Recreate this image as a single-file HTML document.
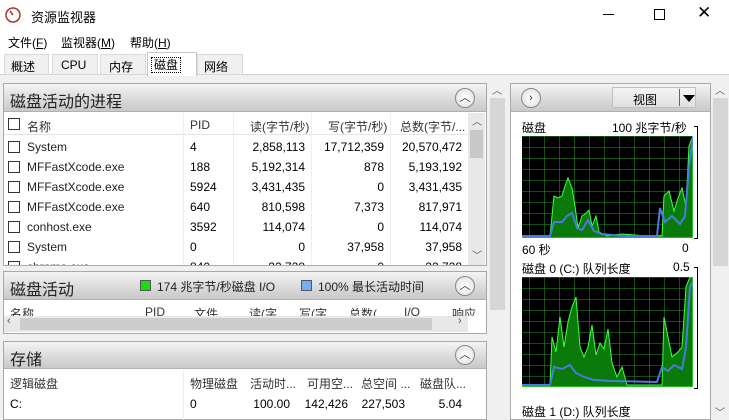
<!DOCTYPE html><html><head><meta charset="utf-8"><style>
*{margin:0;padding:0;box-sizing:border-box}
body{width:729px;height:420px;overflow:hidden;background:#f0f0f0;font-family:"Liberation Sans","Noto Sans CJK SC",sans-serif;font-size:12px;color:#000;position:relative}
.a{position:absolute;white-space:nowrap}
.hdr{position:absolute;background:linear-gradient(#f4f4f4,#d9d9d9 60%,#c9c9c9);border-bottom:1px solid #b0b0b0}
.hdr .t{position:absolute;left:6px;font-size:16px;color:#222}
.circ{position:absolute;width:20px;height:20px;border-radius:50%;border:1px solid #888;background:radial-gradient(#fff,#ddd);font-size:11px;text-align:center;line-height:18px;color:#333}
.cb{position:absolute;width:12px;height:12px;border:1px solid #333;background:#fff}
.r{text-align:right}
.sb{position:absolute;background:#e8e8e8}
.tab{position:absolute;top:54px;height:21px;background:#f0f0f0;border:1px solid #d9d9d9;padding:3px 6px 0}
</style></head><body>
<div class="a" style="left:0;top:0;width:729px;height:31px;background:#fff"></div>
<svg class="a" style="left:5px;top:7px" width="16" height="16"><circle cx="8" cy="8" r="7" fill="#fff" stroke="#b03030" stroke-width="1.5"/><line x1="8" y1="8" x2="5" y2="4" stroke="#b03030" stroke-width="1.5"/></svg>
<div class="a" style="left:31px;top:7px;font-size:13px">资源监视器</div>
<div class="a" style="left:603px;top:14px;width:11px;height:1px;background:#000"></div>
<div class="a" style="left:654px;top:9px;width:11px;height:11px;border:1px solid #000"></div>
<div class="a" style="left:697px;top:3px;font-size:17px">✕</div>
<div class="a" style="left:0;top:31px;width:729px;height:20px;background:#fff"></div>
<div class="a" style="left:8px;top:34px;font-size:12px">文件(<u>F</u>)</div>
<div class="a" style="left:61px;top:34px;font-size:12px">监视器(<u>M</u>)</div>
<div class="a" style="left:130px;top:34px;font-size:12px">帮助(<u>H</u>)</div>
<div class="a" style="left:0;top:51px;width:729px;height:24px;background:#fff;border-bottom:1px solid #d0d0d0"></div>
<div class="tab" style="left:4px;width:45px">概述</div>
<div class="tab" style="left:52px;width:46px;padding-left:8px">CPU</div>
<div class="tab" style="left:100px;width:46px;padding-left:8px">内存</div>
<div class="a" style="left:147px;top:52px;width:50px;height:24px;background:#fff;border:1px solid #c8c8c8;border-bottom:none;padding:3px 4px"><span style="outline:1px dotted #000;padding:0 2px">磁盘</span></div>
<div class="tab" style="left:197px;width:46px">网络</div>

<div class="a" style="left:3px;top:83px;width:484px;height:183px;background:#fff;border:1px solid #a9a9a9"></div>
<div class="hdr" style="left:4px;top:84px;width:482px;height:28px"><div class="t" style="top:4px">磁盘活动的进程</div><div class="circ" style="left:451px;top:4px">︿</div></div>
<div class="a" style="left:4px;top:113px;width:464px;height:22px;background:#fff;border-bottom:1px solid #e5e5e5"></div>
<div class="cb" style="left:8px;top:118px"></div>
<div class="a" style="left:27px;top:118px;color:#333">名称</div>
<div class="a" style="left:190px;top:118px;color:#333">PID</div>
<div class="a" style="left:250px;top:118px;color:#333">读(字节/秒)</div>
<div class="a" style="left:328px;top:118px;color:#333">写(字节/秒)</div>
<div class="a" style="left:400px;top:118px;color:#333">总数(字节/...</div>
<div class="a" style="left:183px;top:113px;width:1px;height:152px;background:#eee"></div>
<div class="a" style="left:233px;top:113px;width:1px;height:152px;background:#eee"></div>
<div class="a" style="left:311px;top:113px;width:1px;height:152px;background:#eee"></div>
<div class="a" style="left:390px;top:113px;width:1px;height:152px;background:#eee"></div>
<div class="a" style="left:4px;top:136px;width:464px;height:129px;overflow:hidden" id="rows"></div>
<div class="sb" style="left:468px;top:113px;width:17px;height:152px"></div>
<div class="a" style="left:470px;top:130px;width:13px;height:28px;background:#c8c8c8"></div>
<div class="a" style="left:472px;top:113px;font-size:10px;color:#555">︿</div>
<div class="a" style="left:472px;top:247px;font-size:10px;color:#555">﹀</div>
<script>
var d=[["System","4","2,858,113","17,712,359","20,570,472"],["MFFastXcode.exe","188","5,192,314","878","5,193,192"],["MFFastXcode.exe","5924","3,431,435","0","3,431,435"],["MFFastXcode.exe","640","810,598","7,373","817,971"],["conhost.exe","3592","114,074","0","114,074"],["System","0","0","37,958","37,958"],["chrome.exe","840","22,728","0","22,728"]];
var h="";d.forEach(function(r,i){var y=1+i*20;h+='<div class="cb" style="left:4px;top:'+(y+4)+'px"></div><div class="a" style="left:23px;top:'+(y+3)+'px;color:#222">'+r[0]+'</div><div class="a" style="left:186px;top:'+(y+3)+'px">'+r[1]+'</div><div class="a r" style="left:229px;width:72px;top:'+(y+3)+'px">'+r[2]+'</div><div class="a r" style="left:307px;width:73px;top:'+(y+3)+'px">'+r[3]+'</div><div class="a r" style="left:386px;width:72px;top:'+(y+3)+'px">'+r[4]+'</div>';});
document.getElementById("rows").innerHTML=h;
</script>
<div class="a" style="left:3px;top:271px;width:484px;height:63px;background:#fff;border:1px solid #a9a9a9"></div>
<div class="hdr" style="left:4px;top:272px;width:482px;height:28px"><div class="t" style="top:4px">磁盘活动</div>
<div class="a" style="left:136px;top:8px;width:11px;height:11px;background:#10e010;border:1px solid #555"></div><div class="a" style="left:153px;top:6px;color:#222">174 兆字节/秒磁盘 I/O</div>
<div class="a" style="left:297px;top:8px;width:11px;height:11px;background:#70b0f0;border:1px solid #555"></div><div class="a" style="left:314px;top:6px;color:#222">100% 最长活动时间</div>
<div class="circ" style="left:451px;top:4px">︿</div></div>
<div class="a" style="left:4px;top:301px;width:482px;height:15px;overflow:hidden;color:#333">
<span class="a" style="left:6px;top:4px">名称</span><span class="a" style="left:141px;top:4px">PID</span><span class="a" style="left:190px;top:4px">文件</span><span class="a" style="left:245px;top:4px">读(字</span><span class="a" style="left:295px;top:4px">写(字</span><span class="a" style="left:345px;top:4px">总数(</span><span class="a" style="left:400px;top:4px">I/O</span><span class="a" style="left:448px;top:4px">响应</span></div>
<div class="sb" style="left:4px;top:316px;width:464px;height:16px"></div>
<div class="a" style="left:20px;top:318px;width:412px;height:12px;background:#cdcdcd"></div>
<div class="a" style="left:7px;top:315px;font-size:11px;color:#555">‹</div>
<div class="a" style="left:458px;top:315px;font-size:11px;color:#555">›</div>
<div class="a" style="left:3px;top:341px;width:484px;height:79px;background:#fff;border:1px solid #a9a9a9"></div>
<div class="hdr" style="left:4px;top:342px;width:482px;height:27px"><div class="t" style="top:4px">存储</div><div class="circ" style="left:451px;top:3px">︿</div></div>
<div class="a" style="left:10px;top:375px;color:#333">逻辑磁盘</div>
<div class="a" style="left:190px;top:375px;color:#333">物理磁盘</div>
<div class="a" style="left:250px;top:375px;color:#333">活动时...</div>
<div class="a" style="left:307px;top:375px;color:#333">可用空...</div>
<div class="a" style="left:361px;top:375px;color:#333">总空间 ...</div>
<div class="a" style="left:420px;top:375px;color:#333">磁盘队...</div>
<div class="a" style="left:10px;top:397px">C:</div>
<div class="a" style="left:190px;top:397px">0</div>
<div class="a r" style="left:240px;width:50px;top:397px">100.00</div>
<div class="a r" style="left:300px;width:48px;top:397px">142,426</div>
<div class="a r" style="left:355px;width:50px;top:397px">227,503</div>
<div class="a r" style="left:410px;width:52px;top:397px">5.04</div>
<div class="a" style="left:183px;top:370px;width:1px;height:50px;background:#eee"></div>
<div class="sb" style="left:489px;top:83px;width:17px;height:337px;background:#f0f0f0"></div>
<div class="a" style="left:490px;top:98px;width:15px;height:212px;background:#d6d6d6"></div>
<div class="a" style="left:492px;top:82px;font-size:10px;color:#555">︿</div>
<div class="a" style="left:510px;top:83px;width:201px;height:337px;background:#fff;border:1px solid #a9a9a9"></div>
<div class="hdr" style="left:511px;top:84px;width:199px;height:28px"><div class="circ" style="left:10px;top:4px">›</div>
<div class="a" style="left:101px;top:3px;width:84px;height:21px;background:linear-gradient(#f5f5f5,#e0e0e0);border:1px solid #c0c0c0;padding:3px 20px">视图</div>
<div class="a" style="left:168px;top:5px;width:1px;height:17px;background:#666"></div>
<div class="a" style="left:172px;top:11px;width:0;height:0;border-left:6px solid transparent;border-right:6px solid transparent;border-top:7px solid #000"></div></div>
<div class="a" style="left:522px;top:119px">磁盘</div>
<div class="a" style="left:612px;top:119px">100 兆字节/秒</div>
<div class="a" style="left:522px;top:241px">60 秒</div>
<div class="a" style="left:682px;top:241px">0</div>
<div class="a" style="left:522px;top:260px">磁盘 0 (C:) 队列长度</div>
<div class="a" style="left:673px;top:260px">0.5</div>
<div class="a" style="left:522px;top:403px">磁盘 1 (D:) 队列长度</div>
<div class="a" style="left:694px;top:126px;width:4px;height:113px;border:1px solid #000;border-left:none"></div>
<div class="a" style="left:694px;top:267px;width:4px;height:122px;border:1px solid #000;border-left:none"></div>
<svg class="a" style="left:522px;top:136px" width="171" height="102">
<defs><pattern id="g" width="15" height="11" patternUnits="userSpaceOnUse" x="-8"><path d="M0 0V11M0 0H15" stroke="#2a9a2a" stroke-width="1" fill="none"/></pattern></defs>
<rect width="171" height="102" fill="#000"/><rect width="171" height="102" fill="url(#g)"/>
<path d="M0 100 L28 100 L32 60 L36 62 L40 60 L43 50 L46 42 L50 52 L53 70 L56 92 L60 80 L63 78 L67 74 L70 90 L74 80 L77 96 L85 100 L100 98 L125 100 L140 100 L142 60 L147 55 L152 75 L156 62 L160 52 L164 70 L167 10 L171 0 L171 102 L0 102Z" fill="#0a7a0a" stroke="#40ff40" stroke-width="1"/>
<path d="M0 100 L28 100 L32 86 L40 86 L45 80 L50 77 L55 92 L60 94 L66 84 L72 95 L80 98 L100 100 L135 100 L138 72 L143 86 L150 80 L158 88 L163 80 L167 30 L171 2" fill="none" stroke="#4a7ae0" stroke-width="2"/>
</svg>
<svg class="a" style="left:522px;top:277px" width="171" height="110">
<defs><pattern id="g2" width="15" height="11" patternUnits="userSpaceOnUse" x="-8"><path d="M0 0V11M0 0H15" stroke="#2a9a2a" stroke-width="1" fill="none"/></pattern></defs>
<rect width="171" height="110" fill="#000"/><rect width="171" height="110" fill="url(#g2)"/>
<path d="M0 108 L28 108 L30 60 L34 75 L38 40 L42 70 L46 45 L50 30 L54 20 L58 70 L62 80 L66 70 L70 48 L74 78 L78 66 L82 72 L86 52 L90 86 L95 100 L100 90 L105 108 L140 108 L142 40 L146 60 L150 80 L156 75 L160 70 L164 10 L168 0 L171 0 L171 110 L0 110Z" fill="#0a7a0a" stroke="#40ff40" stroke-width="1"/>
<path d="M0 108 L28 108 L32 90 L40 92 L48 88 L54 96 L62 100 L72 103 L90 104 L135 105 L140 90 L146 94 L152 88 L160 92 L164 70 L168 10 L171 4" fill="none" stroke="#4a7ae0" stroke-width="2"/>
</svg>
<div class="sb" style="left:712px;top:83px;width:17px;height:337px;background:#f0f0f0"></div>
<div class="a" style="left:713px;top:98px;width:15px;height:168px;background:#d6d6d6"></div>
<div class="a" style="left:715px;top:82px;font-size:10px;color:#555">︿</div>
<div class="a" style="left:715px;top:404px;font-size:10px;color:#555">﹀</div>
</body></html>
